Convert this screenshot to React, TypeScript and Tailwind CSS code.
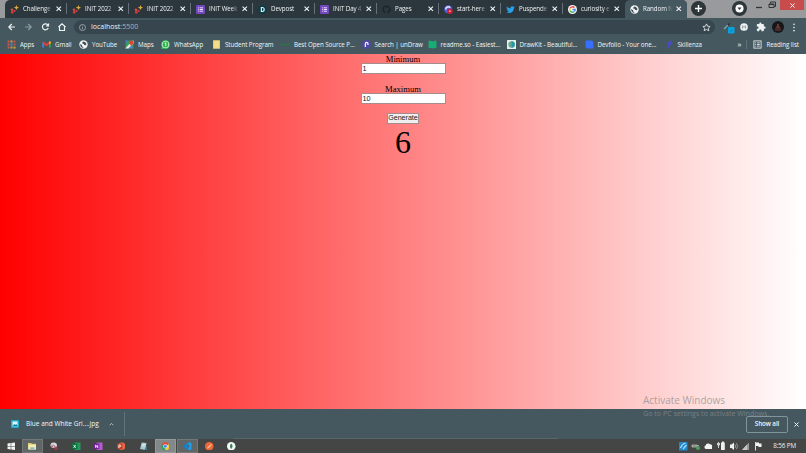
import React from 'react';

type IconName =
  | 'wand' | 'form' | 'devpost' | 'github' | 'start' | 'twitter' | 'google' | 'globe'
  | 'apps' | 'gmail' | 'maps' | 'whatsapp' | 'folder' | 'green' | 'undraw' | 'readme'
  | 'drawkit' | 'devfolio' | 'skillenza' | 'image' | 'windows' | 'explorer' | 'snip'
  | 'excel' | 'onenote' | 'powerpoint' | 'notes' | 'chrome' | 'vscode' | 'postman' | 'mongo';

const icons: Record<IconName, React.ReactNode> = {
  wand: (
    <>
      <circle cx="3.5" cy="8.5" r="2.2" fill="#d9503f" />
      <circle cx="4" cy="13" r="2.4" fill="#d63b3b" />
      <circle cx="8" cy="10.5" r="2" fill="#c33f4e" />
      <path d="M11.500 0l1.300 3L16 4.500l-3.200 1.500L11.500 9l-1.300-3L7 4.500 10.200 3z" fill="#d9a93a" />
    </>
  ),
  form: (
    <>
      <rect width="16" height="16" rx="2" fill="#7347bd" />
      <path d="M3.5 5h1.5M6.5 5h6M3.5 8h1.5M6.5 8h6M3.5 11h1.5M6.5 11h6" stroke="#eee6fa" strokeWidth="1.7" />
    </>
  ),
  devpost: (
    <>
      <path d="M4 1h8l4 7-4 7H4L0 8z" fill="#073f4c" />
      <path d="M6 4.5h1.5a3.5 3.5 0 010 7H6z" fill="none" stroke="#e8f3f5" strokeWidth="2" />
    </>
  ),
  github: (
    <path
      d="M8 .8a7.2 7.2 0 00-2.3 14c.4 0 .5-.2.5-.4v-1.3c-2 .4-2.500-.9-2.500-.9-.3-.8-.8-1-.8-1-.6-.5.1-.5.1-.5.700.1 1.100.8 1.100.8.700 1.100 1.700.8 2.100.6.1-.5.3-.8.5-1-1.600-.2-3.300-.8-3.300-3.500 0-.8.3-1.400.8-1.900-.1-.2-.4-1 .1-2 0 0 .6-.2 2 .8a7 7 0 013.600 0c1.400-1 2-.8 2-.8.4 1 .1 1.800.1 2 .5.5.8 1.100.8 1.900 0 2.700-1.700 3.300-3.300 3.500.3.2.5.7.5 1.300v2c0 .2.1.4.5.4A7.200 7.200 0 008 .8z"
      fill="#1b2429"
    />
  ),
  start: (
    <>
      <circle cx="7.500" cy="7.500" r="7" fill="#5360d6" />
      <path d="M3 8a4.500 4.500 0 018-3" stroke="#e5e8ff" strokeWidth="2.500" fill="none" />
      <circle cx="10.500" cy="11" r="5" fill="#c81f38" />
      <circle cx="10.500" cy="11" r="1.500" fill="#f2b3bd" />
    </>
  ),
  twitter: (
    <path
      d="M15.500 3.500l-1.600.500c.6-.4 1-.9 1.200-1.600l-1.900.7A3.100 3.100 0 008 6C5.400 5.800 3.200 4.600 1.500 2.600c-.9 1.500-.4 3.200 1 4.100-.5 0-1-.2-1.400-.4 0 1.600 1 2.700 2.500 3.100l-1.400.1c.4 1.200 1.500 2 2.900 2.100A6.300 6.300 0 01.500 13c5.700 3.400 13.500.4 13.500-7.700.6-.5 1.100-1.100 1.500-1.800z"
      fill="#2a9fe9"
    />
  ),
  google: (
    <>
      <circle cx="8" cy="8" r="8" fill="#f6f6f6" />
      <path d="M11.500 4.600A4.800 4.800 0 003.900 5.500" stroke="#ea4335" strokeWidth="2.300" fill="none" />
      <path d="M3.900 5.500a4.800 4.800 0 000 5" stroke="#fbbc05" strokeWidth="2.300" fill="none" />
      <path d="M3.900 10.500a4.800 4.800 0 007.300 1.200" stroke="#34a853" strokeWidth="2.300" fill="none" />
      <path d="M8 8h4.800c0 1.500-.5 2.800-1.600 3.700" stroke="#4285f4" strokeWidth="2.300" fill="none" />
    </>
  ),
  globe: (
    <>
      <circle cx="8" cy="8" r="7.500" fill="#f0f2f3" />
      <path d="M2 7l3.500 2.500v2l2 1V14C4 13.500 1.800 11 2 7zM8 2.500l2.500 1L13 6l-.5 3.500-3-.5L8 6.500l-2.500-.5.8-2z" fill="#3d4f57" />
    </>
  ),
  apps: (
    <>
      <path d="M1 2.500h3.500M1 8h3.500M1 13.500h3.500" stroke="#de5246" strokeWidth="3.500" />
      <path d="M6.300 2.500h3.500M6.300 13.500h3.500" stroke="#d79d35" strokeWidth="3.500" />
      <path d="M6.300 8h3.500" stroke="#4a87d9" strokeWidth="3.500" />
      <path d="M11.600 2.500h3.500M11.600 8h3.500" stroke="#c95143" strokeWidth="3.500" />
      <path d="M11.600 13.500h3.500" stroke="#cfa83c" strokeWidth="3.500" />
    </>
  ),
  gmail: (
    <>
      <path d="M2 13.500V4" stroke="#4285f4" strokeWidth="3" />
      <path d="M14 13.500V4" stroke="#34a853" strokeWidth="3" />
      <path d="M1.500 4L8 9l6.500-5" stroke="#e34134" strokeWidth="3.200" fill="none" />
      <path d="M14 2.500v4" stroke="#fbbc04" strokeWidth="3" />
    </>
  ),
  maps: (
    <>
      <path d="M1 1h14v14H1z" fill="#3a9b59" />
      <path d="M1 14L14 1h1v5L6 15H1z" fill="#e7e7e7" />
      <path d="M7 15l4-5 4 5z" fill="#4c83e5" />
      <path d="M1 1h5L1 6z" fill="#3c78d8" />
      <circle cx="11" cy="4.500" r="3.800" fill="#db4437" />
      <path d="M8 6l3 5 3-5z" fill="#db4437" />
    </>
  ),
  whatsapp: (
    <>
      <path d="M8 0a8 8 0 11-4 15l-3.500 1L1.500 12A8 8 0 018 0z" fill="#35c75a" />
      <circle cx="8" cy="8" r="6.300" fill="#eefbf0" />
      <circle cx="8" cy="8" r="5.200" fill="#28b64a" />
      <path d="M6.500 6L8.500 5v6" stroke="#fff" strokeWidth="1.600" fill="none" />
    </>
  ),
  folder: <path d="M2 .5h12v15H2z" fill="#f4dd84" />,
  green: <path d="M0 8h4M5 8h5M11 8h4" stroke="#267c43" strokeWidth="3" />,
  undraw: (
    <>
      <circle cx="8" cy="8" r="8" fill="#4d48a3" />
      <path d="M6 12.500V6.500a2.300 2.300 0 014.600 0V9" stroke="#f2f0ff" strokeWidth="2.300" fill="none" />
    </>
  ),
  readme: <path d="M1 1.500q4-1 7 1 3-2 7-1v13q-4-1-7 .5-3-1.500-7-.5z" fill="#18ad75" />,
  drawkit: (
    <>
      <rect width="16" height="16" rx="1" fill="#e9f1ee" />
      <circle cx="8" cy="8" r="5.800" fill="#6ca78f" />
      <path d="M8 2.200a5.800 5.800 0 010 11.600z" fill="#2499a7" />
    </>
  ),
  devfolio: <path d="M2 1h8q5 0 5 5v9H5q-4 0-4-4V2z" fill="#3770ff" />,
  skillenza: <path d="M6 2h7l-2 5-5 7H3l2-6z" fill="#4a4ac4" />,
  image: (
    <>
      <rect width="16" height="16" rx="2" fill="#24a9c8" />
      <rect x="3" y="3" width="10" height="9.500" fill="#dcf8ff" />
      <path d="M3.500 12l3-4 2 2 2-2 2.500 4z" fill="#157b96" />
    </>
  ),
  windows: <path d="M1 3l6-1v5.500H1zM8 1.800L15 1v6.500H8zM1 8.500h6V14l-6-1zM8 8.500h7V15l-7-.8z" fill="#f3f3f3" />,
  explorer: (
    <>
      <path d="M0 2h6l1 1.500h8V14H0z" fill="#dfcc7c" />
      <path d="M1 5h14v9H1z" fill="#f6ecac" />
      <path d="M4 10h8v4H4z" fill="#86bcd4" />
    </>
  ),
  snip: (
    <>
      <ellipse cx="7" cy="6" rx="6" ry="5" fill="#d8d8df" />
      <path d="M6 5l5 6" stroke="#a03f4a" strokeWidth="1.600" />
      <circle cx="11" cy="12" r="2.300" fill="none" stroke="#c6404c" strokeWidth="1.800" />
      <circle cx="4" cy="8" r="2" fill="#a9748b" />
    </>
  ),
  excel: (
    <>
      <rect x="5" y="1" width="11" height="14" fill="#219a5b" />
      <rect y="3" width="10" height="10" fill="#08713d" />
      <path d="M3 5.500l4 5.500M7 5.500L3 11" stroke="#fff" strokeWidth="1.600" />
    </>
  ),
  onenote: (
    <>
      <rect x="5" y="1" width="11" height="14" fill="#b65bd3" />
      <rect y="3" width="10" height="10" fill="#751ea0" />
      <path d="M3 11V5.500L7 11V5.500" stroke="#fff" strokeWidth="1.500" fill="none" />
    </>
  ),
  powerpoint: (
    <>
      <circle cx="9" cy="8" r="7" fill="#e76946" />
      <rect y="3" width="10" height="10" fill="#bd3c20" />
      <path d="M3.500 11.500V5.500h2a1.700 1.700 0 010 3.500h-2" stroke="#fff" strokeWidth="1.500" fill="none" />
    </>
  ),
  notes: (
    <>
      <path d="M5 1l9 1-2 13-10-2z" fill="#a4cbd0" />
      <path d="M6 4l6 1M5 7l6 1" stroke="#eff8f8" strokeWidth="1.500" />
      <path d="M10 15l5-8v8z" fill="#447b8b" />
    </>
  ),
  chrome: (
    <>
      <path d="M8 8L1.100 4A8 8 0 0115 4z" fill="#e24a3d" />
      <path d="M8 8L15 4A8 8 0 018 16z" fill="#f5c93c" />
      <path d="M8 8v8A8 8 0 011.100 4z" fill="#31a25c" />
      <circle cx="8" cy="8" r="4" fill="#f2f2f2" />
      <circle cx="8" cy="8" r="3" fill="#4389e8" />
    </>
  ),
  vscode: (
    <>
      <path d="M11 0l5 2v12l-5 2-8-7z" fill="#219be5" />
      <path d="M1 5l9 8M1 11l9-8" stroke="#0d82cb" strokeWidth="2.600" />
      <path d="M11 5v6L7 8z" fill="#50565a" />
    </>
  ),
  postman: (
    <>
      <circle cx="8" cy="8" r="8" fill="#ef6937" />
      <path d="M4 12l8-8M6 11l6-5" stroke="#ffe3d5" strokeWidth="1.400" />
    </>
  ),
  mongo: (
    <>
      <circle cx="8" cy="8" r="8" fill="#f4f8f5" />
      <path d="M8 3q5 5 0 10-5-5 0-10z" fill="#32825b" />
    </>
  ),
};

function Icon({ name, className = 'size-[9px]' }: { name: IconName; className?: string }) {
  return (
    <svg viewBox="0 0 16 16" fill="none" className={`shrink-0 ${className}`}>
      {icons[name]}
    </svg>
  );
}

function Cross({ className = 'size-[5px]' }: { className?: string }) {
  return (
    <svg viewBox="0 0 10 10" className={`shrink-0 ${className}`}>
      <path d="M1 1l8 8M9 1L1 9" stroke="currentColor" strokeWidth="2" />
    </svg>
  );
}

const tabs: { icon: IconName; title: string }[] = [
  { icon: 'wand', title: 'Challenge' },
  { icon: 'wand', title: 'INIT 2022' },
  { icon: 'wand', title: 'INIT 2022' },
  { icon: 'form', title: 'INIT Week' },
  { icon: 'devpost', title: 'Devpost' },
  { icon: 'form', title: 'INIT Day 4' },
  { icon: 'github', title: 'Pages' },
  { icon: 'start', title: 'start-here' },
  { icon: 'twitter', title: 'Puspende' },
  { icon: 'google', title: 'curiosity e' },
  { icon: 'globe', title: 'Random N' },
];

const bookmarks: { icon: IconName; label: string; width: string }[] = [
  { icon: 'apps', label: 'Apps', width: 'w-[35px]' },
  { icon: 'gmail', label: 'Gmail', width: 'w-[37px]' },
  { icon: 'globe', label: 'YouTube', width: 'w-[46px]' },
  { icon: 'maps', label: 'Maps', width: 'w-[36px]' },
  { icon: 'whatsapp', label: 'WhatsApp', width: 'w-[51px]' },
  { icon: 'folder', label: 'Student Program', width: 'w-[69px]' },
  { icon: 'green', label: 'Best Open Source P...', width: 'w-[80.500px]' },
  { icon: 'undraw', label: 'Search | unDraw', width: 'w-[66px]' },
  { icon: 'readme', label: 'readme.so - Easiest...', width: 'w-[79px]' },
  { icon: 'drawkit', label: 'DrawKit - Beautiful...', width: 'w-[78px]' },
  { icon: 'devfolio', label: 'Devfolio - Your one...', width: 'w-[80px]' },
  { icon: 'skillenza', label: 'Skillenza', width: 'w-[50px]' },
];

const taskbarApps: { icon: IconName; state?: 'open' | 'active' }[] = [
  { icon: 'windows' },
  { icon: 'explorer', state: 'open' },
  { icon: 'snip' },
  { icon: 'excel' },
  { icon: 'onenote' },
  { icon: 'powerpoint' },
  { icon: 'notes' },
  { icon: 'chrome', state: 'active' },
  { icon: 'vscode', state: 'open' },
  { icon: 'postman' },
  { icon: 'mongo' },
];

function TabStrip() {
  return (
    <div className="flex h-[18px] bg-[#999a9b] pl-[5px]">
      <div className="flex rounded-t-[5px] bg-[#2c373d]">
        {tabs.map((tab, i) => {
          const active = i === tabs.length - 1;
          return (
            <div
              key={i}
              className={`relative flex h-[18px] w-[62px] items-center pl-[5px] text-[6.2px] tracking-[-0.08px] ${
                active ? 'rounded-t-[5px] bg-[#455860] text-[#f2f5f6]' : 'text-[#f0f3f4]'
              }`}
            >
              <Icon name={tab.icon} />
              <span className="ml-1 w-[30px] whitespace-nowrap [mask-image:linear-gradient(to_right,black_75%,transparent)]">
                {tab.title}
              </span>
              <Cross className="ml-[3px] size-[5.500px]" />
              {i < tabs.length - 2 && <span className="absolute right-0 top-[3px] h-[11px] w-px bg-[#64717a]" />}
            </div>
          );
        })}
      </div>
      <div className="ml-[4px] mt-[1px] flex size-[15px] items-center justify-center rounded-full bg-[#2d363b] text-white">
        <svg viewBox="0 0 10 10" className="size-[7px]">
          <path d="M5 0v10M0 5h10" stroke="currentColor" strokeWidth="2" />
        </svg>
      </div>
      <div className="ml-[26px] mt-[1px] flex size-[15px] items-center justify-center rounded-full bg-[#2d363b]">
        <svg viewBox="0 0 10 10" className="size-[9px]">
          <circle cx="5" cy="5" r="4.500" fill="#fff" />
          <path d="M2.800 4h4.400L5 6.800z" fill="#2d363b" />
        </svg>
      </div>
      <div className="ml-auto mr-[2px] flex text-[#333]">
        <svg viewBox="0 0 26 11" className="h-[11px] w-[26px]">
          <path d="M2 7.500h6" stroke="currentColor" strokeWidth="1.300" />
          <path d="M16.500 3.500V2h5v4.500H20" stroke="currentColor" fill="none" />
          <path d="M15 4h5v3.500h-5zM15 4.500h5" stroke="currentColor" fill="none" />
        </svg>
        <div className="flex h-[10px] w-[24px] items-center justify-center bg-[#c84c4c] text-white">
          <Cross />
        </div>
      </div>
    </div>
  );
}

function Toolbar() {
  return (
    <div className="flex h-[18px] items-center pl-2 text-[#edf1f2]">
      <svg viewBox="0 0 60 10" className="h-[10px] w-[60px]" fill="none" stroke="currentColor" strokeWidth="1.200">
        <path d="M7 5H.800M3.800 2L.800 5l3 3" />
        <path d="M17 5h6.200M20.200 2l3 3-3 3" stroke="#899aa2" />
        <path d="M40 3.300A3 3 0 1040.200 6M40.500 1.500v2.300h-2.300" />
        <path d="M50.500 5L54 1.800 57.500 5M51.500 4.500v4h5v-4" />
      </svg>
      <div className="ml-[6px] flex h-[14px] w-[641px] items-center rounded-full bg-[#37464e] pl-[5px] text-[7px]">
        <svg viewBox="0 0 10 10" className="size-[7px]" fill="none" stroke="#b6c0c5">
          <circle cx="5" cy="5" r="4.300" />
          <path d="M5 4.400v3M5 2.300v1" />
        </svg>
        <span className="ml-[5px]">localhost</span>
        <span className="text-[#a9b4b9]">:5500</span>
        <svg viewBox="0 0 10 10" className="ml-auto mr-[4px] size-[9px]" fill="none" stroke="currentColor" strokeWidth="0.900">
          <path d="M5 1l1.200 2.600 2.800.3L7 5.800l.6 2.800L5 7.200 2.400 8.600 3 5.800 1 3.900l2.800-.3z" />
        </svg>
      </div>
      <div className="ml-[7px] flex items-center">
        <svg viewBox="0 0 14 14" className="size-[14px]">
          <path d="M2 9l5-5" stroke="#78aab8" strokeWidth="1.300" />
          <path d="M5 4l2 2 1-3z" fill="#222a30" />
          <rect x="6" y="7" width="6.500" height="6.500" rx="0.800" fill="#08a3df" />
          <path d="M7.800 10.500l1 .8 1.800-1.700" stroke="#0877b0" strokeWidth="0.800" fill="none" />
        </svg>
        <svg viewBox="0 0 10 10" className="ml-[4px] size-[8px]">
          <circle cx="5" cy="5" r="4.800" fill="#f1f3f4" />
          <path d="M3.800 3Q2.500 3 3 5q-.5 2 .8 2M6.200 3Q7.500 3 7 5q.5 2-.8 2M5 3.500v3" stroke="#58646b" strokeWidth="0.700" fill="none" />
        </svg>
        <svg viewBox="0 0 24 24" className="ml-[8px] size-[10px]" fill="currentColor">
          <path d="M20.500 11H19V7a2 2 0 00-2-2h-4V3.500a2.500 2.500 0 00-5 0V5H4a2 2 0 00-2 2v3.800h1.500a2.700 2.700 0 010 5.400H2V20a2 2 0 002 2h3.800v-1.500a2.700 2.700 0 015.400 0V22H17a2 2 0 002-2v-4h1.500a2.500 2.500 0 000-5z" />
        </svg>
        <svg viewBox="0 0 12 12" className="ml-[6px] size-[12px]">
          <circle cx="6" cy="6" r="6" fill="#17171a" />
          <path d="M3 10V7l2-1V3h2v3l2 1v3" fill="#492b2b" />
          <path d="M5 4h2M4 6h4" stroke="#985044" strokeWidth="0.700" />
        </svg>
        <svg viewBox="0 0 4 10" className="ml-[8px] h-[9px] w-[4px]" fill="currentColor">
          <circle cx="2" cy="1.500" r="0.900" />
          <circle cx="2" cy="5" r="0.900" />
          <circle cx="2" cy="8.500" r="0.900" />
        </svg>
      </div>
    </div>
  );
}

function BookmarksBar() {
  return (
    <div className="flex h-[18px] items-center whitespace-nowrap pb-px pl-[7px] text-[6.2px] tracking-[-0.05px] text-[#f3f6f7]">
      {bookmarks.map((b) => (
        <div key={b.label} className={`flex shrink-0 items-center gap-[4px] ${b.width}`}>
          <Icon name={b.icon} />
          <span>{b.label}</span>
        </div>
      ))}
      <span className="ml-[23px] pb-[2px] text-[8px] leading-none">»</span>
      <span className="ml-[5px] h-[9px] w-px bg-[#617279]" />
      <svg viewBox="0 0 10 10" className="ml-[6px] size-[9px]" fill="none" stroke="currentColor" strokeWidth="0.900">
        <rect x="1" y="1" width="8" height="8" />
        <path d="M2.500 3.200h1M4.500 3.200h3M2.500 5h1M4.500 5h3M2.500 6.800h1M4.500 6.800h3" />
      </svg>
      <span className="ml-[4px]">Reading list</span>
    </div>
  );
}

function RandomNumberPage() {
  const [min, setMin] = React.useState('1');
  const [max, setMax] = React.useState('10');
  const [result, setResult] = React.useState(6);

  const generate = () => {
    const lo = Number(min);
    const hi = Number(max);
    setResult(Math.floor(Math.random() * (hi - lo + 1)) + lo);
  };

  const inputClass =
    '-mt-px h-[11px] w-[85px] border border-[#a58d8d] bg-white px-[1px] font-["Liberation_Sans",sans-serif] text-[7.3px] leading-none text-[#222] outline-none';

  return (
    <main className="flex h-[355px] flex-col items-center bg-[linear-gradient(to_right,#ff0000,#ffffff)] font-['Liberation_Serif',serif] text-black">
      <label className="flex flex-col items-center text-[8.6px] leading-[10px]">
        Minimum
        <input className={inputClass} value={min} onChange={(e) => setMin(e.target.value)} />
      </label>
      <label className="mt-[10px] flex flex-col items-center text-[8.6px] leading-[10px]">
        Maximum
        <input className={inputClass} value={max} onChange={(e) => setMax(e.target.value)} />
      </label>
      <button
        onClick={generate}
        className="mt-[9px] h-[11px] w-[32px] border border-[#a58d8d] bg-[#efefef] font-['Liberation_Sans',sans-serif] text-[7.1px] leading-none text-[#222]"
      >
        Generate
      </button>
      <p className="mt-[2px] text-[32px] leading-[32px]">{result}</p>
    </main>
  );
}

function DownloadBar() {
  return (
    <div className="flex h-[30px] items-center bg-[#455860] text-[6.5px] text-[#f3f6f7]">
      <div className="flex h-[24px] w-[125px] items-center border-r border-[#60727a] pl-[11px]">
        <Icon name="image" className="size-[8px]" />
        <span className="ml-[7px] w-[74px] whitespace-nowrap">Blue and White Gri....jpg</span>
        <svg viewBox="0 0 8 6" className="ml-[9px] h-[4px] w-[5px]" fill="none" stroke="currentColor">
          <path d="M1 5l3-3 3 3" />
        </svg>
      </div>
      <button className="ml-auto h-[17px] w-[42px] rounded-[2px] border border-[#82939b] text-[6.3px] font-semibold tracking-[-0.1px]">
        Show all
      </button>
      <Cross className="ml-[6px] mr-[7px] size-[5px]" />
    </div>
  );
}

function Taskbar() {
  return (
    <div className="flex h-[14px] items-center bg-[#444645]">
      {taskbarApps.map((app) => (
        <div
          key={app.icon}
          className={`flex h-[14px] items-center justify-center ${
            app.icon === 'windows' ? 'w-[21.500px]' : 'mr-[1.200px] w-[21px]'
          } ${
            app.state === 'active'
              ? 'border border-[#939899] bg-[#838889]'
              : app.state === 'open'
                ? 'border border-[#727777] bg-[#606566]'
                : ''
          }`}
        >
          <Icon name={app.icon} className="size-[8.500px]" />
        </div>
      ))}
      <svg viewBox="0 0 86 12" className="ml-auto h-[12px] w-[86px]">
        <rect x="1" y="2" width="8.500" height="8.500" rx="0.600" fill="#2488cb" />
        <path d="M2.500 8q1.500-4 5-5M5 9l3.500-4" stroke="#a8e2f7" strokeWidth="1.200" fill="none" />
        <path d="M14 5h5v2h-5zM19 5.500h2" stroke="#c6c8c7" strokeWidth="0.700" fill="#737b76" />
        <circle cx="20" cy="8" r="2" fill="#4f9d59" />
        <path d="M28 9a1.900 1.900 0 01-.2-3.700A2.600 2.600 0 0132 4.200 2 2 0 0134 7v2z" fill="#f4f4f4" />
        <path d="M40.500 2v3.500M39.500 3v2h2V3M40.500 5v3" stroke="#eee" strokeWidth="0.800" fill="none" />
        <path d="M43 2.500h3.800V10H43zM44 1.500h1.800v1H44z" fill="#efefef" />
        <path d="M52 4.500h1.500l2.500-2v7.500l-2.500-2H52z" fill="#eee" />
        <path d="M57 4.500q1.200 1.700 0 3.500M58.500 3.200q2 3 0 6" stroke="#aaa" strokeWidth="0.800" fill="none" />
        <path d="M71 2.500v7.500h-7z" fill="#999" />
        <path d="M69 4.500V10h-5z" fill="#c7c7c7" />
        <path d="M77.500 2v8.500" stroke="#eee" strokeWidth="0.900" />
        <path d="M78 2.500h3v1h2.500v3.500h-3V6H78z" fill="#f4f4f4" />
      </svg>
      <span className="ml-[9px] mr-[10px] whitespace-nowrap text-[6.3px] tracking-[-0.1px] text-[#f0f0f0]">8:56 PM</span>
    </div>
  );
}

export default function App() {
  return (
    <div className="relative h-[453px] w-[806px] overflow-hidden font-['Open_Sans','Noto_Sans',sans-serif]">
      <header className="bg-[#455860]">
        <TabStrip />
        <Toolbar />
        <BookmarksBar />
      </header>
      <RandomNumberPage />
      <DownloadBar />
      <Taskbar />

      {/* Hover outline above the taskbar */}
      <div className="absolute left-[233px] top-[438px] h-px w-[325px] bg-[#58666b]" />

      {/* Activation watermark */}
      <div className="pointer-events-none absolute left-[643px] top-[394px] whitespace-nowrap text-[#8e8e8e]/75">
        <p className="text-[10px] leading-[13px]">Activate Windows</p>
        <p className="text-[7.100px] leading-[12px]">Go to PC settings to activate Windows.</p>
      </div>
    </div>
  );
}
